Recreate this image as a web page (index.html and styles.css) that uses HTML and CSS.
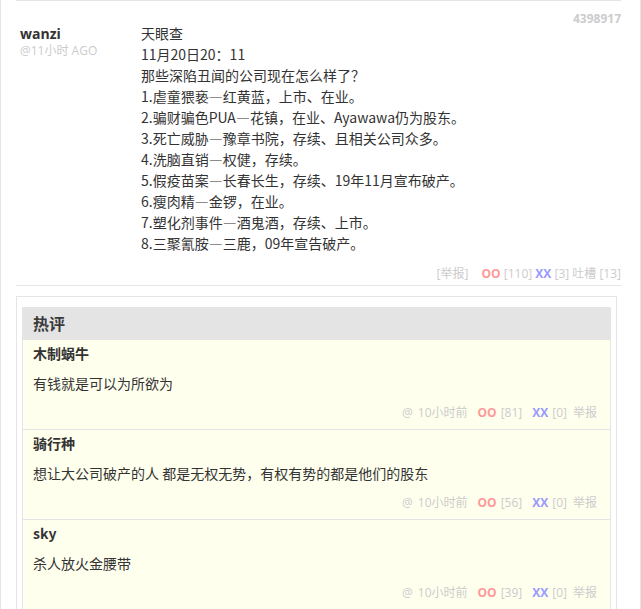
FILE: index.html
```html
<!DOCTYPE html>
<html lang="zh-CN">
<head>
<meta charset="utf-8">
<title>jandan</title>
<link rel="stylesheet" href="styles.css">
</head>
<body>
<div class="page">
  <div class="prev"></div>
  <div class="post">
    <div class="post-id">4398917</div>
    <div class="post-main">
      <div class="author">
        <div class="author-name">wanzi</div>
        <div class="author-time">@11小时 AGO</div>
      </div>
      <div class="post-text">
        <p>天眼查</p>
        <p>11月20日20：11</p>
        <p>那些深陷丑闻的公司现在怎么样了？</p>
        <p>1.虐童猥亵<span class="dash">—</span>红黄蓝，上市、在业。</p>
        <p>2.骗财骗色PUA<span class="dash">—</span>花镇，在业、Ayawawa仍为股东。</p>
        <p>3.死亡威胁<span class="dash">—</span>豫章书院，存续、且相关公司众多。</p>
        <p>4.洗脑直销<span class="dash">—</span>权健，存续。</p>
        <p>5.假疫苗案<span class="dash">—</span>长春长生，存续、19年11月宣布破产。</p>
        <p>6.瘦肉精<span class="dash">—</span>金锣，在业。</p>
        <p>7.塑化剂事件<span class="dash">—</span>酒鬼酒，存续、上市。</p>
        <p>8.三聚氰胺<span class="dash">—</span>三鹿，09年宣告破产。</p>
      </div>
    </div>
    <div class="post-foot">
      <span class="report">[举报]</span>
      <span class="oo">OO</span> <span>[110]</span> <span class="xx">XX</span> <span>[3]</span> <span>吐槽 [13]</span>
    </div>
  </div>
  <div class="hot-box">
    <div class="hot-inner">
      <div class="hot-title">热评</div>
      <div class="cmt">
        <div class="cmt-name">木制蜗牛</div>
        <div class="cmt-text">有钱就是可以为所欲为</div>
        <div class="cmt-foot"><span>@</span><span class="time">10小时前</span><span class="oo">OO</span><span class="num">[81]</span><span class="xx">XX</span><span class="num">[0]</span><span class="rep">举报</span></div>
      </div>
      <div class="cmt">
        <div class="cmt-name">骑行种</div>
        <div class="cmt-text">想让大公司破产的人 都是无权无势，有权有势的都是他们的股东</div>
        <div class="cmt-foot"><span>@</span><span class="time">10小时前</span><span class="oo">OO</span><span class="num">[56]</span><span class="xx">XX</span><span class="num">[0]</span><span class="rep">举报</span></div>
      </div>
      <div class="cmt">
        <div class="cmt-name">sky</div>
        <div class="cmt-text">杀人放火金腰带</div>
        <div class="cmt-foot"><span>@</span><span class="time">10小时前</span><span class="oo">OO</span><span class="num">[39]</span><span class="xx">XX</span><span class="num">[0]</span><span class="rep">举报</span></div>
      </div>
    </div>
  </div>
</div>
</body>
</html>
```
FILE: styles.css
```css
html, body {
  margin: 0;
  padding: 0;
  background: #fff;
}
body {
  font-family: "Noto Sans CJK SC", "Open Sans", sans-serif;
  color: #333;
  font-size: 14px;
}
.page {
  width: 641px;
  height: 609px;
  overflow: hidden;
  border-left: 1px solid #e5e5e5;
  border-right: 1px solid #e5e5e5;
  padding: 0 19px 0 15px;
  box-sizing: border-box;
}
.prev {
  border-bottom: 1px solid #e5e5e5;
}
.post {
  padding-top: 10px;
  padding-bottom: 3px;
  border-bottom: 1px solid #e5e5e5;
}
.post-id {
  text-align: right;
  font-family: "Open Sans", "Noto Sans CJK SC", sans-serif;
  font-size: 12px;
  line-height: 16px;
  font-weight: bold;
  color: #ccc;
  height: 12px;
}
.post-main {
  display: flex;
}
.author {
  width: 125px;
  padding-left: 4px;
  box-sizing: border-box;
  flex: none;
}
.author-name {
  font-family: "Open Sans", "Noto Sans CJK SC", sans-serif;
  font-weight: bold;
  font-size: 14px;
  line-height: 21px;
  color: #333;
}
.author-time {
  font-family: "Open Sans", "Noto Sans CJK SC", sans-serif;
  font-size: 12px;
  line-height: 14px;
  color: #ccc;
}
.post-text p {
  margin: 0;
  line-height: 21px;
}
.dash {
  font-feature-settings: "fwid" 1;
}
.post-foot {
  margin-top: 12px;
  text-align: right;
  font-family: "Open Sans", "Noto Sans CJK SC", sans-serif;
  font-size: 12px;
  line-height: 16px;
  color: #ccc;
}
.report {
  margin-right: 10px;
}
.oo {
  color: #f99;
  font-weight: bold;
}
.xx {
  color: #99f;
  font-weight: bold;
}
.hot-box {
  margin-top: 10px;
  border: 1px solid #e5e5e5;
  padding: 10px 5px 0 5px;
  margin-right: 4px;
}
.hot-inner {
  border-left: 1px solid #e5e5e5;
  border-right: 1px solid #e5e5e5;
}
.hot-title {
  background: #e4e4e4;
  height: 33px;
  line-height: 33px;
  padding-left: 10px;
  font-size: 16px;
  font-weight: bold;
  color: #3a3a3a;
}
.cmt {
  background: #ffffee;
  padding: 3px 13px 8px 10px;
  border-bottom: 1px solid #e5e5e5;
}
.cmt-name {
  font-weight: bold;
  font-size: 14px;
  line-height: 20px;
}
.cmt-text {
  margin-top: 10px;
  line-height: 20px;
  font-size: 14px;
}
.cmt-foot {
  margin-top: 12px;
  display: flex;
  justify-content: flex-end;
  font-family: "Open Sans", "Noto Sans CJK SC", sans-serif;
  font-size: 12px;
  line-height: 16px;
  color: #ccc;
}
.cmt-foot .time {
  margin-left: 5px;
}
.cmt-foot .oo {
  margin-left: 10px;
}
.cmt-foot .num {
  margin-left: 4px;
}
.cmt-foot .xx {
  margin-left: 10px;
}
.cmt-foot .rep {
  margin-left: 6px;
}
```
